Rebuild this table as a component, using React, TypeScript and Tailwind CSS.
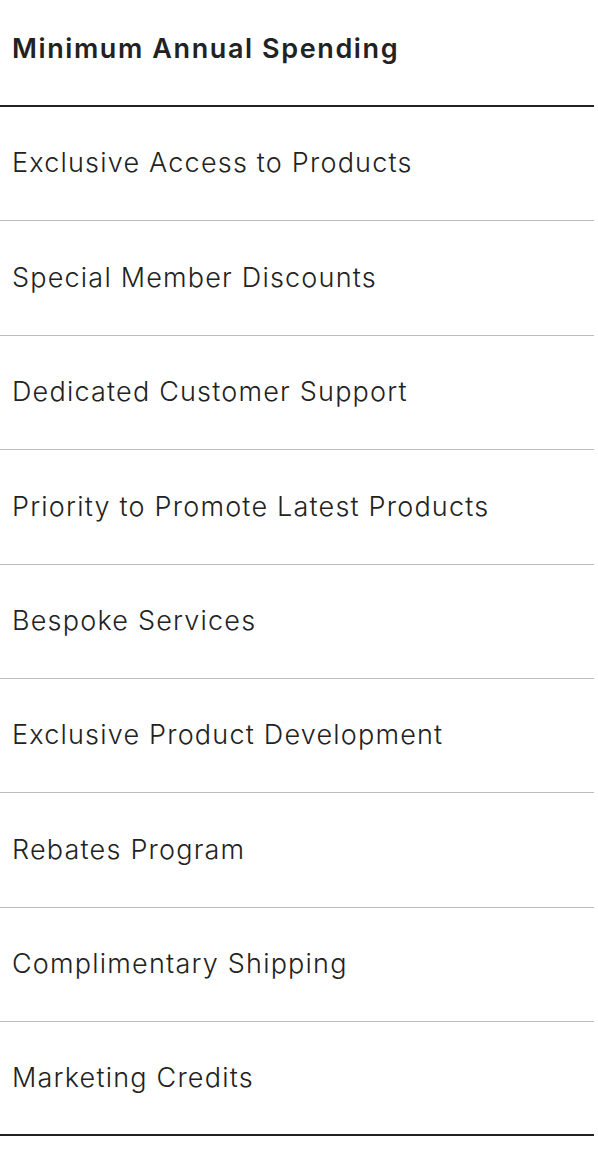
import React from "react";

const benefits = [
  "Exclusive Access to Products",
  "Special Member Discounts",
  "Dedicated Customer Support",
  "Priority to Promote Latest Products",
  "Bespoke Services",
  "Exclusive Product Development",
  "Rebates Program",
  "Complimentary Shipping",
  "Marketing Credits",
];

export default function App() {
  return (
    <div className="min-h-screen bg-white font-['Inter',sans-serif] text-[#222222]">
      <div className="w-[594px]">
        <div className="flex h-[107px] items-center border-b-2 border-[#222222] px-3 pb-1.5">
          <h3 className="text-[27px] font-semibold tracking-[1.6px]">
            Minimum Annual Spending
          </h3>
        </div>
        {benefits.map((item, i) => (
          <div
            key={item}
            className={`flex h-[114.375px] items-center px-3 ${
              i === benefits.length - 1
                ? "border-b-2 border-[#222222]"
                : "border-b border-[#bdbdbd]"
            }`}
          >
            <span className="text-[27px] font-light tracking-[1.2px]">
              {item}
            </span>
          </div>
        ))}
      </div>
    </div>
  );
}
